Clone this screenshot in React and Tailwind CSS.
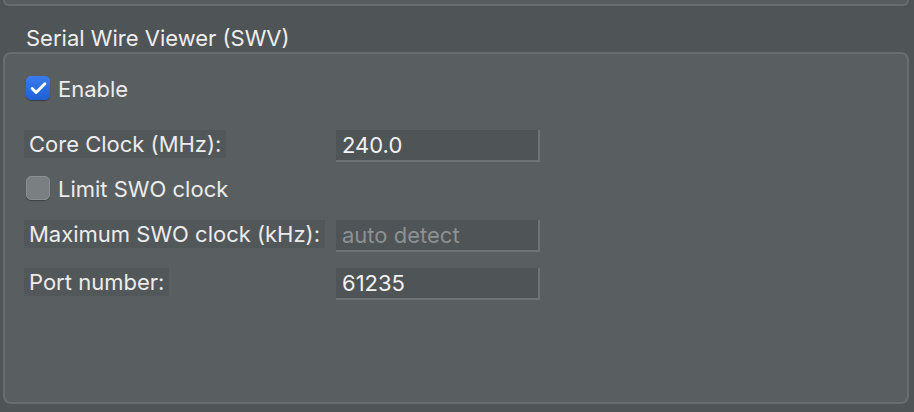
import { Check } from 'lucide-react'

function Checkbox({ checked }) {
  if (checked) {
    return (
      <span className="flex h-[24px] w-[24px] items-center justify-center rounded-[5px] bg-gradient-to-b from-[#3a7cf0] to-[#1f5fd6] shadow-[0_1px_1px_rgba(0,0,0,0.35)]">
        <Check className="h-[19px] w-[19px] text-white" strokeWidth={3.75} />
      </span>
    )
  }
  return (
    <span className="block h-[24px] w-[24px] rounded-[5px] border border-[#8a8f91] bg-[#7a7f81] shadow-[0_1px_1px_rgba(0,0,0,0.3)]" />
  )
}

function Field({ label, value, placeholder }) {
  return (
    <div className="flex h-[32px] items-start">
      <div className="w-[312px]">
        <span className="inline-flex h-[28px] items-center bg-[#52575a] px-[5px] text-[22px] text-[#ececec]">
          {label}
        </span>
      </div>
      <div
        className={
          'flex h-[32px] w-[204px] items-center border-r-2 border-b-2 border-[#6e7375] bg-[#4f5456] px-[6px] text-[22px] ' +
          (placeholder ? 'text-[#8d9193]' : 'text-[#f2f2f2]')
        }
      >
        {value}
      </div>
    </div>
  )
}

export default function App() {
  return (
    <div
      className="flex h-[412px] w-[914px] flex-col overflow-hidden bg-[#4f5456]"
      style={{ fontFamily: 'Inter, "Noto Sans", sans-serif' }}
    >
      <div className="mx-[3px] h-[6px] w-[906px] rounded-b-[7px] border-x-2 border-b-2 border-[#686d6f] bg-[#575c5e]" />

      <div className="h-[46px] pl-[26px] pt-[21px] text-[22px] leading-[22px] text-[#eeeeee]">
        Serial Wire Viewer (SWV)
      </div>

      <div className="mx-[3px] flex h-[352px] w-[906px] flex-col rounded-[8px] border-2 border-[#686d6f] bg-[#595e60] pl-[19px] pt-[22px]">
        <label className="flex h-[24px] items-center gap-[8px] pl-[2px] text-[22px] text-[#ececec]">
          <Checkbox checked />
          <span className="pt-[2px]">Enable</span>
        </label>

        <div className="mt-[30px]">
          <Field label="Core Clock (MHz):" value="240.0" />
        </div>

        <label className="mt-[14px] flex h-[24px] items-center gap-[8px] pl-[2px] text-[22px] text-[#ececec]">
          <Checkbox />
          <span className="pt-[2px]">Limit SWO clock</span>
        </label>

        <div className="mt-[20px]">
          <Field label="Maximum SWO clock (kHz):" value="auto detect" placeholder />
        </div>

        <div className="mt-[16px]">
          <Field label="Port number:" value="61235" />
        </div>
      </div>
    </div>
  )
}
